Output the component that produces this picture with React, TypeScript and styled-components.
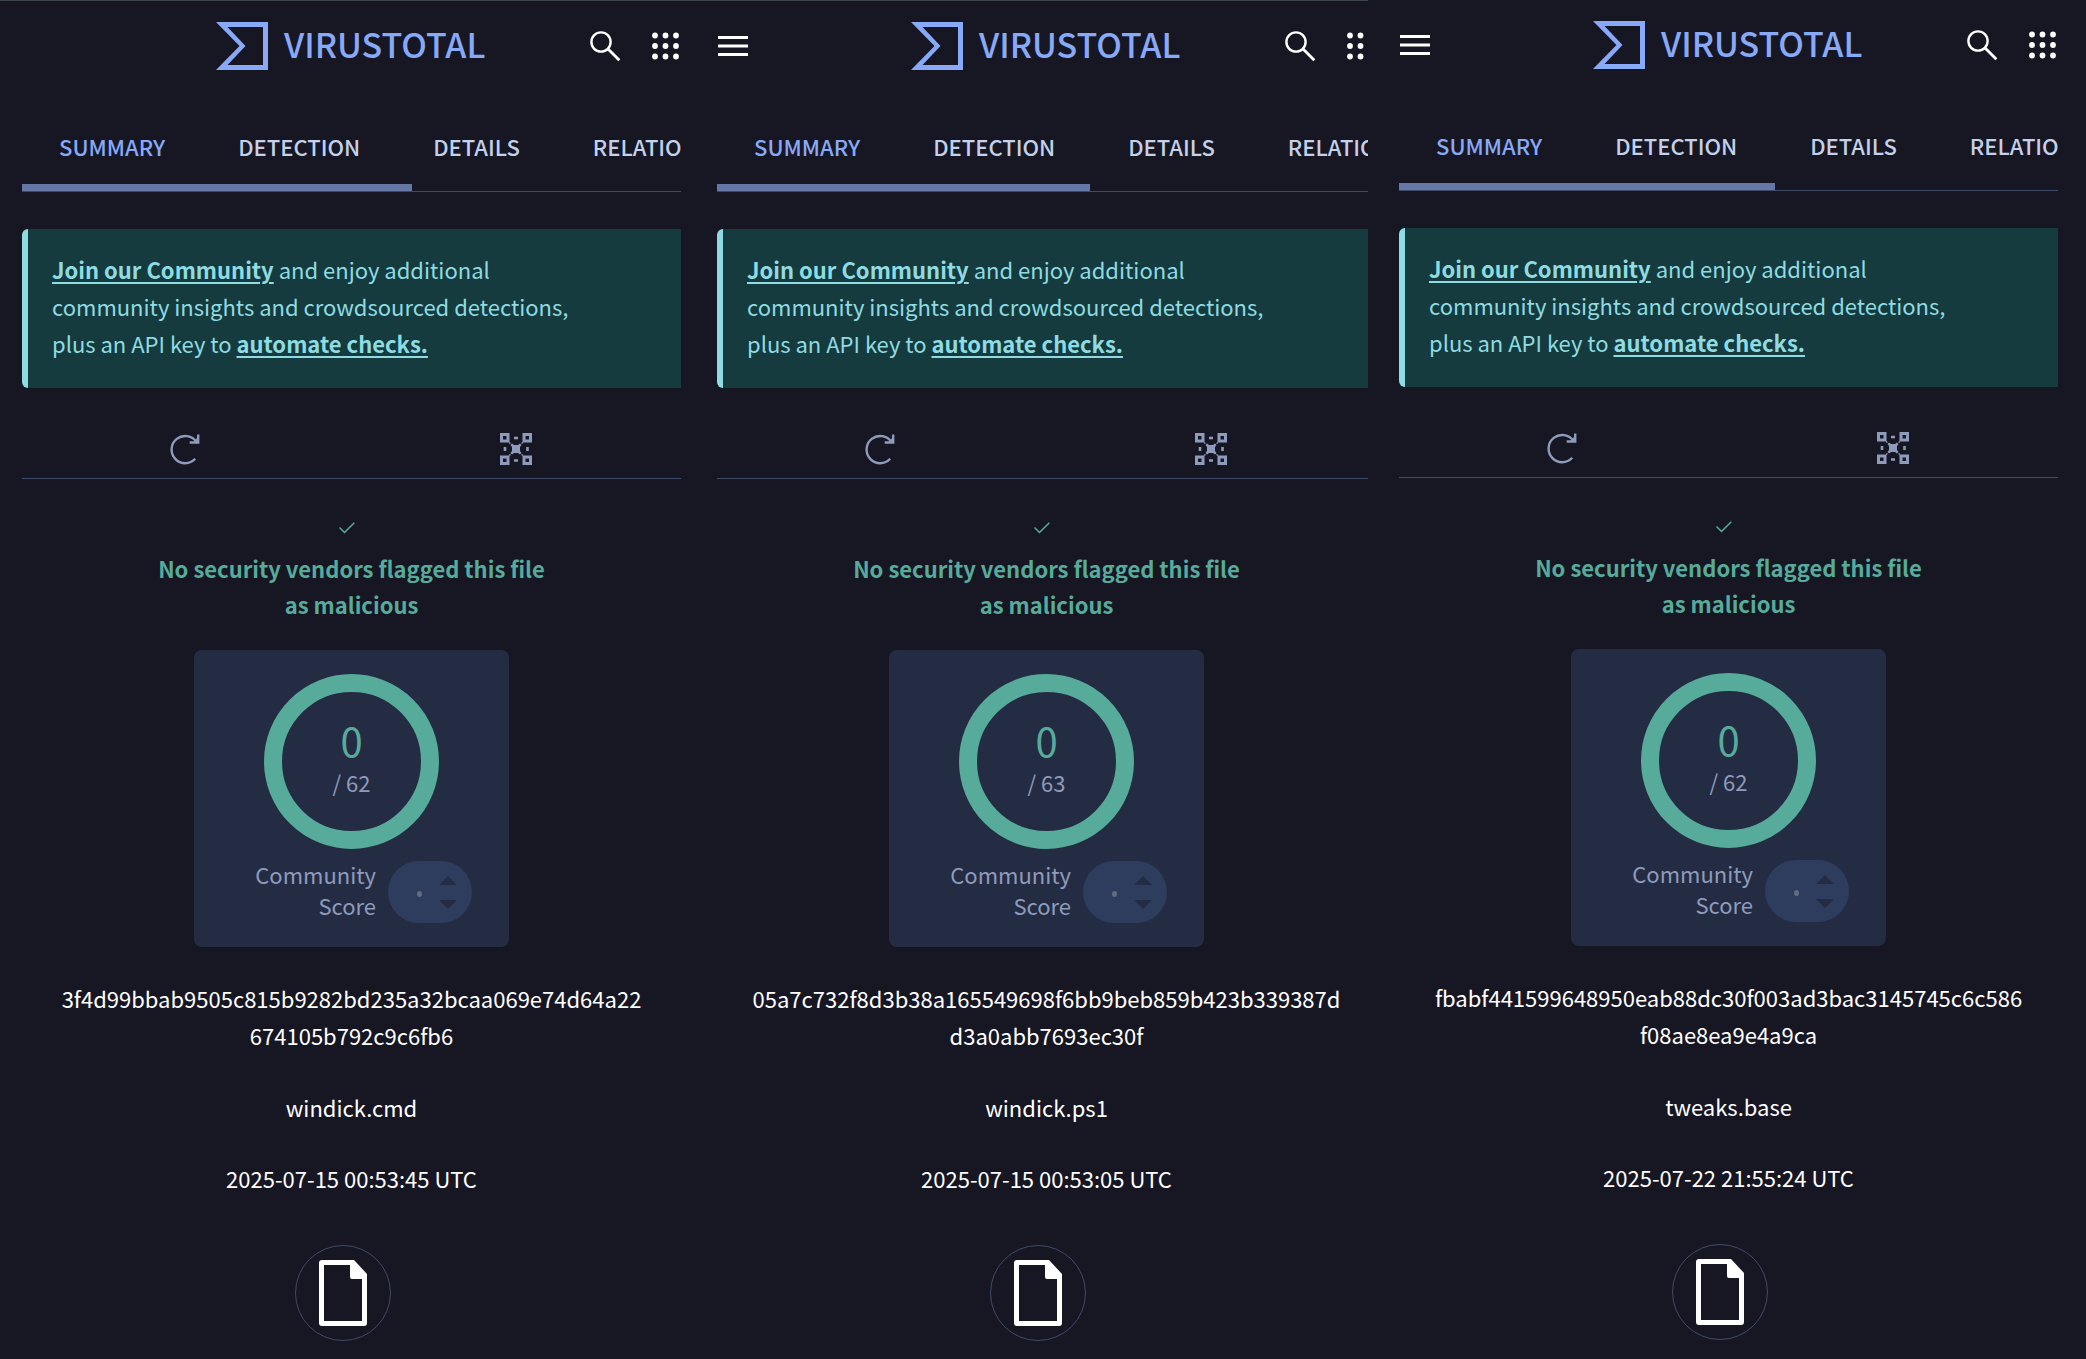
import React from "react";
import styled, { createGlobalStyle } from "styled-components";

const colors = {
  page: "#171724",
  accent: "#87a9f8",
  text: "#c3d1ea",
  muted: "#8f9bbb",
  line: "#3f4b68",
  bar: "#6577a4",
  noticeBg: "#153b3f",
  notice: "#8fdbe2",
  green: "#57ab9a",
  card: "#242c44",
  pill: "#2e3d5e",
};

const Global = createGlobalStyle`
  * { box-sizing: border-box; }
  html, body { margin: 0; background: ${colors.page}; }
  body {
    font-family: "Noto Sans CJK JP", "Noto Sans", sans-serif;
    color: #fff;
    overflow-x: hidden;
  }
  h1, p { margin: 0; }
`;

const Page = styled.div`
  display: grid;
  grid-template-columns: 695fr 673fr 718fr;
  min-height: 100vh;
  overflow: hidden;
`;

const Panel = styled.main<{ $edge: boolean }>`
  min-width: 0;
  overflow: hidden;
  padding-left: ${(p) => (p.$edge ? 31 : 22)}px;
  padding-right: ${(p) => (p.$edge ? 28 : 0)}px;
  border-top: ${(p) => (p.$edge ? 0 : 1)}px solid #3c4549;
`;

const Viewport = styled.div<{ $inset: number }>`
  margin-right: ${(p) => p.$inset}px;
  overflow: hidden;
`;

const Canvas = styled.div`
  min-width: 659px;
`;

const Header = styled.header`
  display: flex;
  align-items: center;
  height: 90px;
  padding-right: 2px;
`;

const IconButton = styled.button<{ $gap?: number }>`
  display: flex;
  padding: 0;
  border: 0;
  background: none;
  color: #fff;
  margin-left: ${(p) => p.$gap ?? 0}px;
`;

const MenuSlot = styled.div`
  width: 194px;
`;

const Brand = styled.a`
  display: flex;
  align-items: flex-start;
  gap: 16px;
  flex: 1;
  color: ${colors.accent};
  text-decoration: none;
  font-size: 34px;
  line-height: 44px;
  font-weight: 500;
`;

const Tabs = styled.nav`
  display: flex;
  height: 93px;
  padding: 36px 0 0 37px;
  gap: 73px;
`;

const Tab = styled.a<{ $active?: boolean }>`
  color: ${(p) => (p.$active ? colors.accent : colors.text)};
  font-size: 22px;
  line-height: 38px;
  font-weight: 500;
  text-decoration: none;
  white-space: nowrap;
`;

const Track = styled.div`
  height: 8px;
  border-bottom: 1px solid ${colors.line};
`;

const Progress = styled.div<{ $width: number }>`
  width: ${(p) => p.$width}px;
  height: 7px;
  background: ${colors.bar};
`;

const Notice = styled.aside`
  margin-top: 37px;
  padding: 22px 90px 26px 24px;
  border-left: 6px solid ${colors.notice};
  border-radius: 6px 0 0 6px;
  background: ${colors.noticeBg};
  color: ${colors.notice};
  font-size: 22px;
  line-height: 37px;
  white-space: nowrap;
`;

const NoticeLink = styled.a`
  color: inherit;
  font-weight: 700;
  text-underline-offset: 3px;
  text-decoration-thickness: 2px;
`;

const Actions = styled.div`
  display: grid;
  grid-template-columns: 1fr 1fr;
  justify-items: center;
  align-items: center;
  height: 91px;
  padding-top: 31px;
  border-bottom: 1px solid ${colors.line};
`;

const ActionButton = styled(IconButton)`
  color: ${colors.muted};
`;

const Summary = styled.section`
  display: flex;
  flex-direction: column;
  align-items: center;
  text-align: center;
`;

const CheckWrap = styled.div`
  display: flex;
  padding-right: 9px;
  margin: 43px 0 16px;
`;

const Verdict = styled.h1`
  color: ${colors.green};
  font-size: 22px;
  line-height: 36px;
  font-weight: 700;
`;

const ScoreCard = styled.div`
  display: flex;
  flex-direction: column;
  align-items: center;
  width: 315px;
  margin-top: 28px;
  padding: 24px 0;
  border-radius: 8px;
  background: ${colors.card};
`;

const Ring = styled.div`
  display: flex;
  flex-direction: column;
  align-items: center;
  width: 175px;
  height: 175px;
  padding-top: 24px;
  border: 18px solid ${colors.green};
  border-radius: 50%;
`;

const Detections = styled.span`
  color: ${colors.green};
  font-size: 40px;
  line-height: 48px;
`;

const Engines = styled.span`
  color: ${colors.muted};
  font-size: 22px;
  line-height: 36px;
`;

const Community = styled.div`
  display: flex;
  justify-content: flex-end;
  align-items: flex-end;
  align-self: stretch;
  gap: 12px;
  margin-top: 10px;
  padding-right: 37px;
`;

const CommunityLabel = styled.p`
  padding-bottom: 2px;
  color: ${colors.muted};
  font-size: 22px;
  line-height: 31px;
  text-align: right;
`;

const Pill = styled.div`
  display: flex;
  align-items: center;
  justify-content: flex-end;
  gap: 17px;
  width: 84px;
  height: 62px;
  padding-right: 15px;
  border-radius: 31px;
  background: ${colors.pill};
`;

const Dot = styled.span`
  width: 5px;
  height: 6px;
  margin-top: 4px;
  border-radius: 50%;
  background: #626b80;
`;

const FileInfo = styled.p<{ $top: number }>`
  margin-top: ${(p) => p.$top}px;
  font-size: 22px;
  line-height: 37px;
`;

const FileBadge = styled.div`
  display: flex;
  align-items: center;
  justify-content: center;
  width: 96px;
  height: 96px;
  margin: 48px 17px 16px 0;
  border: 1px solid ${colors.line};
  border-radius: 50%;
`;

const MenuIcon = () => (
  <svg width="31" height="22" viewBox="0 0 31 22" stroke="currentColor" strokeWidth="2.8">
    <path d="M1 2.500h30M1 11h30M1 19.500h30" />
  </svg>
);

const LogoIcon = () => (
  <svg width="52" height="48" viewBox="0 0 52 48" fill="currentColor">
    <path fillRule="evenodd" d="M0 0h52v48H0l23.500-24zM11.500 5l18 19-18 19H47V5z" />
  </svg>
);

const SearchIcon = () => (
  <svg width="31" height="31" viewBox="0 0 31 31" fill="none" stroke="currentColor" strokeWidth="2.400">
    <circle cx="11" cy="11" r="9.600" />
    <path d="M17.800 17.800l11.500 11.500" strokeWidth="2.800" />
  </svg>
);

const AppsIcon = () => (
  <svg width="27" height="28" viewBox="0 0 27 28" fill="currentColor">
    {[3, 13.5, 24].map((x) =>
      [3.5, 14, 24.5].map((y) => <circle key={`${x}-${y}`} cx={x} cy={y} r="2.900" />)
    )}
  </svg>
);

const RefreshIcon = () => (
  <svg width="34" height="32" viewBox="0 0 34 32" fill="none" stroke="currentColor" strokeWidth="2.400">
    <path d="M25.200 25.800A13.600 13.600 0 1 1 26.500 9" />
    <path d="M28.200 1.500v8h-8.500" />
    <path d="M28 4v5.500h-5z" fill="currentColor" stroke="none" />
  </svg>
);

const GraphIcon = () => (
  <svg width="32" height="32" viewBox="0 0 32 32" fill="none" stroke="currentColor" strokeWidth="3">
    <path d="M1.500 1.500h6.500v6.500h-6.500zM24 1.500h6.500v6.500h-6.500zM1.500 24h6.500v6.500h-6.500zM24 24h6.500v6.500h-6.500z" />
    <path d="M14 5h4M14 27.500h4M5 14v4M27.500 14v4" strokeWidth="2.600" />
    <path d="M9 9.500l1.500 1M23 9.500l-1.500 1M9 22.500l1.500-1M23 22.500l-1.500-1" strokeWidth="1.500" />
    <path
      fill="currentColor"
      stroke="none"
      d="M10.500 12l1.500-1.500 2 1.500h4l2-1.500 1.500 1.500-1.500 2v4l1.500 2-1.500 1.500-2-1.500h-4l-2 1.500-1.500-1.500 1.500-2v-4z"
    />
  </svg>
);

const CheckIcon = () => (
  <svg width="16" height="12" viewBox="0 0 16 12" fill="none" stroke={colors.green} strokeWidth="1.500">
    <path d="M.5 5.500l5 5L15.300.7" />
  </svg>
);

const VoteIcon = () => (
  <svg width="18" height="34" viewBox="0 0 18 34" fill={colors.card}>
    <path d="M0 10l9-9 9 9zM0 25h18l-9 9z" />
  </svg>
);

const FileIcon = () => (
  <svg width="50" height="68" viewBox="0 0 50 68">
    <path
      fill="#fff"
      fillRule="evenodd"
      d="M4 1h32l13 14v49a3 3 0 0 1-3 3H4a3 3 0 0 1-3-3V4a3 3 0 0 1 3-3zM6 6v56h38V20H34a2 2 0 0 1-2-2V6z"
    />
  </svg>
);

type Report = {
  menu: boolean;
  inset: number;
  edge: boolean;
  progress: number;
  engines: number;
  hash: [string, string];
  name: string;
  date: string;
};

const reports: Report[] = [
  {
    menu: false, inset: 14, edge: false, progress: 390, engines: 62,
    hash: ["3f4d99bbab9505c815b9282bd235a32bcaa069e74d64a22", "674105b792c9c6fb6"],
    name: "windick.cmd", date: "2025-07-15 00:53:45 UTC",
  },
  {
    menu: true, inset: 0, edge: false, progress: 373, engines: 63,
    hash: ["05a7c732f8d3b38a165549698f6bb9beb859b423b339387d", "d3a0abb7693ec30f"],
    name: "windick.ps1", date: "2025-07-15 00:53:05 UTC",
  },
  {
    menu: true, inset: 0, edge: true, progress: 376, engines: 62,
    hash: ["fbabf441599648950eab88dc30f003ad3bac3145745c6c586", "f08ae8ea9e4a9ca"],
    name: "tweaks.base", date: "2025-07-22 21:55:24 UTC",
  },
];

const ReportPanel = ({ report }: { report: Report }) => (
  <Panel $edge={report.edge}>
    <Viewport $inset={report.inset}>
      <Canvas>
        <Header>
          <MenuSlot>
            {report.menu && (
              <IconButton aria-label="Menu"><MenuIcon /></IconButton>
            )}
          </MenuSlot>
          <Brand href="#"><LogoIcon />VIRUSTOTAL</Brand>
          <IconButton aria-label="Search"><SearchIcon /></IconButton>
          <IconButton aria-label="Apps" $gap={31}><AppsIcon /></IconButton>
        </Header>
        <Tabs>
          <Tab href="#summary" $active>SUMMARY</Tab>
          <Tab href="#detection">DETECTION</Tab>
          <Tab href="#details">DETAILS</Tab>
          <Tab href="#relations">RELATIO</Tab>
        </Tabs>
        <Track><Progress $width={report.progress} /></Track>
        <Notice>
          <NoticeLink href="#join">Join our Community</NoticeLink> and enjoy additional<br />
          community insights and crowdsourced detections,<br />
          plus an API key to <NoticeLink href="#api">automate checks.</NoticeLink>
        </Notice>
        <Actions>
          <ActionButton aria-label="Reanalyze"><RefreshIcon /></ActionButton>
          <ActionButton aria-label="Graph"><GraphIcon /></ActionButton>
        </Actions>
        <Summary>
          <CheckWrap><CheckIcon /></CheckWrap>
          <Verdict>No security vendors flagged this file<br />as malicious</Verdict>
          <ScoreCard>
            <Ring>
              <Detections>0</Detections>
              <Engines>/ {report.engines}</Engines>
            </Ring>
            <Community>
              <CommunityLabel>Community<br />Score</CommunityLabel>
              <Pill><Dot /><VoteIcon /></Pill>
            </Community>
          </ScoreCard>
          <FileInfo $top={33}>{report.hash[0]}<br />{report.hash[1]}</FileInfo>
          <FileInfo $top={35}>{report.name}</FileInfo>
          <FileInfo $top={34}>{report.date}</FileInfo>
          <FileBadge><FileIcon /></FileBadge>
        </Summary>
      </Canvas>
    </Viewport>
  </Panel>
);

export default function App() {
  return (
    <>
      <Global />
      <Page>
        {reports.map((report) => (
          <ReportPanel key={report.name} report={report} />
        ))}
      </Page>
    </>
  );
}
